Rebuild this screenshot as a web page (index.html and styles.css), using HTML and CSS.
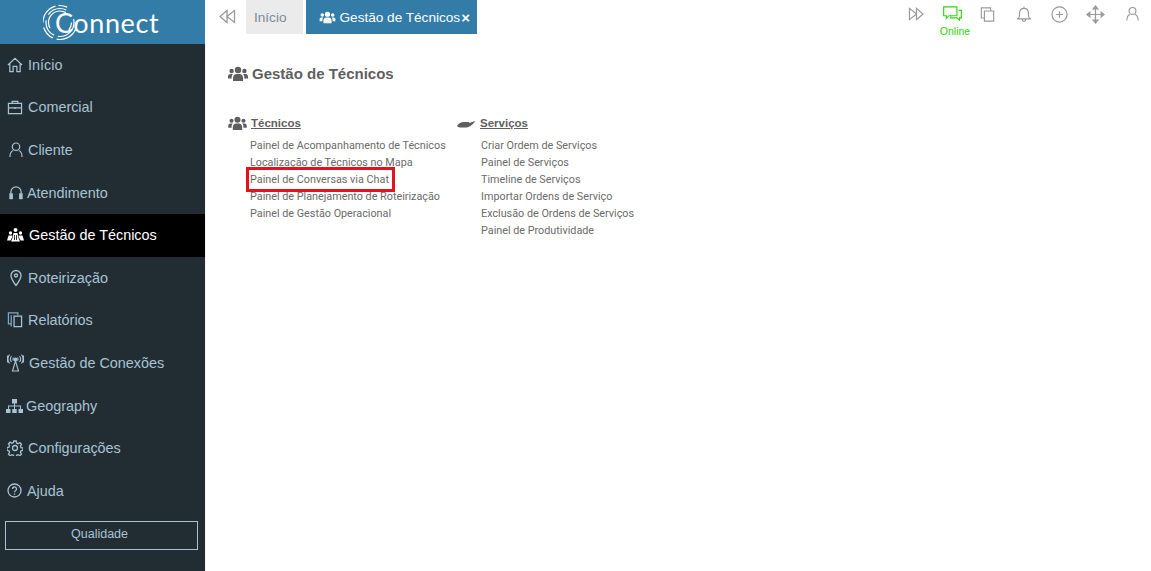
FILE: index.html
```html
<!DOCTYPE html>
<html>
<head>
<meta name="viewport" content="width=device-width, initial-scale=1">
<title>Connect</title>
<link rel="stylesheet" href="styles.css">
</head>
<body>

<svg class="defs" width="0" height="0">
	<symbol id="i-team" viewBox="0 0 20 16">
		<circle cx="10" cy="4" r="3.2"/>
		<circle cx="3.6" cy="5" r="2.2"/>
		<circle cx="16.4" cy="5" r="2.2"/>
		<path d="M5 15v-3.2C5 9.6 6.6 8 8.6 8h2.8C13.400 8 15 9.600 15 11.800V15z"/>
		<path d="M0 12.500V10.500C0 9 1 8 2.400 8H5C4 9 3.700 10 3.700 11.500V12.500z"/>
		<path d="M20 12.500V10.500C20 9 19 8 17.600 8H15C16 9 16.300 10 16.300 11.500V12.500z"/>
	</symbol>
</svg>

<div class="sidebar">
	<div class="logo">
		<svg class="logo-rings" width="35" height="37" viewBox="0 0 35 37">
			<circle cx="17" cy="18.500" r="17" stroke-dasharray="30 4 14 5 22 3 9 20"/>
			<circle cx="17" cy="18.500" r="14" stroke-dasharray="24 4 18 6 20 12"/>
			<circle cx="17" cy="18.500" r="11.500" stroke-dasharray="8 22 30 12"/>
		</svg>
		<span class="logo-text">Connect</span>
	</div>
	<ul class="menu">
		<li>
			<svg class="ico" width="16" height="16" viewBox="0 0 17 17"><path d="M1 8.500L8.500 1.500 16 8.500M3 7v8.500h3.500V10h4v5.500H14V7"/></svg>
			Início
		</li>
		<li>
			<svg class="ico" width="16" height="15" viewBox="0 0 17 16"><path d="M1.500 3.500h14v11h-14zM1.500 8.500h14M5.500 3.500V1.500h6v2M8.500 7.500v2"/></svg>
			Comercial
		</li>
		<li class="pad-1">
			<svg class="ico" width="14" height="16" viewBox="0 0 15 17"><circle cx="7.500" cy="5" r="4"/><path d="M1 16c0-4 2-6.500 3.500-7M14 16c0-4-2-6.500-3.500-7"/></svg>
			Cliente
		</li>
		<li class="pad-1 tight">
			<svg class="ico" width="14" height="16" viewBox="0 0 15 17"><path d="M2 13V7.500a5.500 5.500 0 0 1 11 0V13"/><rect x="1" y="9.500" width="2.500" height="5" fill="currentColor"/><rect x="11.500" y="9.500" width="2.500" height="5" fill="currentColor"/></svg>
			Atendimento
		</li>
		<li class="active">
			<svg class="ico ico-fill" width="17" height="14" viewBox="0 0 17 14"><circle cx="3.500" cy="5" r="1.700"/><circle cx="8.500" cy="2" r="2"/><circle cx="13.500" cy="5" r="1.700"/><path d="M0 12.500L1.500 7.500h4L5 9.500 3.500 12.500zM5.500 10L6.500 5h4l1 5 1.500 3.500H4zM17 12.500L15.500 7.500h-4L12 9.500l1.500 3z"/><path d="M7.500 7v5M9.500 7v5" stroke="#000" stroke-width="0.800"/></svg>
			Gestão de Técnicos
		</li>
		<li class="pad-1">
			<svg class="ico" width="14" height="18" viewBox="0 0 14 18"><path d="M7 16.500C4 12.500 2 9.500 2 6.500a5 5 0 0 1 10 0c0 3-2 6-5 10z"/><circle cx="7" cy="6.500" r="1.500"/></svg>
			Roteirização
		</li>
		<li>
			<svg class="ico" width="16" height="16" viewBox="0 0 17 17"><path d="M4.500 12.500H1.500V1h10v2.500" stroke="#7fa8c8"/><path d="M4.500 3.500v12" stroke="#7fa8c8"/><path d="M7.500 4.500h8v11h-8z"/></svg>
			Relatórios
		</li>
		<li>
			<svg class="ico ico-thick" width="17" height="18" viewBox="0 0 17 18"><circle cx="8.500" cy="5.500" r="1.500" fill="currentColor"/><path d="M8.500 7l-3 10h6zM6.500 6.500a2.500 2.500 0 0 1 0-3M10.500 6.500a2.500 2.500 0 0 0 0-3M4.500 8a5 5 0 0 1 0-6M12.500 8a5 5 0 0 0 0-6M2.500 9.500a8 8 0 0 1 0-9M14.500 9.500a8 8 0 0 0 0-9M1 8.500a7 7 0 0 1 0-7M16 8.500a7 7 0 0 0 0-7"/></svg>
			Gestão de Conexões
		</li>
		<li class="geo">
			<svg class="ico ico-fill" width="17" height="14" viewBox="0 0 17 14"><rect x="6" y="0" width="5" height="4.500"/><rect x="0" y="10" width="4.500" height="4"/><rect x="6.250" y="10" width="4.500" height="4"/><rect x="12.500" y="10" width="4.500" height="4"/><path d="M8 4h1v2.500h6v3.500h-1V7.500H9V10H8V7.500H3V10H2V6.500h6z"/></svg>
			Geography
		</li>
		<li>
			<svg class="ico" width="16" height="16" viewBox="0 0 16 16"><circle cx="8" cy="8" r="2.500"/><path d="M6.800 1h2.400l.4 2 1.500.7 1.800-1.100 1.600 1.700-1.100 1.700.6 1.600 2 .4v2.400l-2 .4-.6 1.500 1.100 1.800-1.600 1.600-1.800-1.100-1.500.6-.4 2H6.800l-.4-2-1.500-.6-1.800 1.100-1.600-1.600 1.100-1.800-.6-1.500-2-.4V7.600l2-.4.6-1.600-1.100-1.700 1.600-1.700 1.800 1.100 1.500-.7z"/></svg>
			Configurações
		</li>
		<li>
			<svg class="ico" width="15" height="15" viewBox="0 0 15 15"><circle cx="7.500" cy="7.500" r="6.500"/><path d="M5.500 6a2 2 0 1 1 3 1.700c-.7.400-1 .8-1 1.600M7.500 10.500v1.200"/></svg>
			Ajuda
		</li>
	</ul>
	<div class="quality">Qualidade</div>
</div>

<div class="main">
	<div class="topbar">
		<svg class="back" width="18" height="15" viewBox="0 0 18 15"><path d="M9 1.500L2 7.500l7 6zM16.500 1.500L9 7.500l7.500 6z"/></svg>
		<div class="tab">Início</div>
		<div class="tab tab-on">
			<svg class="tab-ico" width="17" height="13" viewBox="0 0 20 16"><use href="#i-team"/></svg>
			Gestão de Técnicos<span class="tab-x">×</span>
		</div>
		<div class="tools">
			<svg class="tool" width="17" height="14" viewBox="0 0 18 15"><path d="M9 1.500l7 6-7 6zM1.500 1.500L9 7.500l-7.500 6z"/></svg>
			<div class="status">
				<svg class="tool tool-on" width="21" height="15" viewBox="0 0 22 17"><path d="M1 1h15v10H7l-3 3v-3H1zM18 5h3v8.500h-2V16l-3-2.500H9V12"/></svg>
				<span>Online</span>
			</div>
			<svg class="tool" width="15" height="15" viewBox="0 0 16 17"><path d="M4.500 4.500h10.500v11.500H4.500zM4.500 12.500H1V1h10.500v3.500"/></svg>
			<svg class="tool tool-bell" width="14" height="18" viewBox="0 0 16 19"><path d="M1 15c2-1.500 2-3 2-6.500C3 5 5 3 8 3s5 2 5 5.500c0 3.500 0 5 2 6.500zM6 15.500a2 2.500 0 0 0 4 0M8 3V1"/></svg>
			<svg class="tool tool-plus" width="17" height="17" viewBox="0 0 18 18"><circle cx="9" cy="9" r="8"/><path d="M9 5.500v7M5.500 9h7"/></svg>
			<svg class="tool tool-move" width="19" height="19" viewBox="0 0 20 20"><path d="M10 1v18M1 10h18M7.500 4L10 1l2.500 3zM7.500 16l2.500 3 2.500-3zM4 7.500L1 10l3 2.500zM16 7.500l3 2.500-3 2.500z"/></svg>
			<svg class="tool tool-user" width="13" height="16" viewBox="0 0 15 17"><circle cx="7.500" cy="5" r="4"/><path d="M1 16c0-4 2-6.500 3.500-7M14 16c0-4-2-6.500-3.500-7"/></svg>
		</div>
	</div>

	<div class="content">
		<h2 class="page-title">
			<svg width="20" height="16" viewBox="0 0 20 16"><use href="#i-team"/></svg>
			Gestão de Técnicos
		</h2>
		<div class="groups">
			<div class="group group-1">
				<h3>
					<svg width="19" height="15" viewBox="0 0 20 16"><use href="#i-team"/></svg>
					<span>Técnicos</span>
				</h3>
				<ul>
					<li>Painel de Acompanhamento de Técnicos</li>
					<li>Localização de Técnicos no Mapa</li>
					<li class="mark">Painel de Conversas via Chat</li>
					<li>Painel de Planejamento de Roteirização</li>
					<li>Painel de Gestão Operacional</li>
				</ul>
			</div>
			<div class="group group-2">
				<h3>
					<svg width="18" height="9" viewBox="0 0 18 9"><path d="M0 7C1.500 4.500 4 3 7 3h4.500c.8 0 1 1 .2 1.200L9.500 5l5.500-2 2.500-.8c.5 0 .6.500.2.800C15 6 12.500 8.500 8.500 8.500H3.500C2.500 8.500 1 8 0 7z"/></svg>
					<span>Serviços</span>
				</h3>
				<ul>
					<li>Criar Ordem de Serviços</li>
					<li>Painel de Serviços</li>
					<li>Timeline de Serviços</li>
					<li>Importar Ordens de Serviço</li>
					<li>Exclusão de Ordens de Serviços</li>
					<li>Painel de Produtividade</li>
				</ul>
			</div>
		</div>
	</div>
</div>

</body>
</html>
```

FILE: styles.css
```css
* {
  box-sizing: border-box;
}

html, body {
  height: 100%;
}

body {
  margin: 0;
  display: flex;
  overflow: hidden;
  font-family: "Liberation Sans", Arial, sans-serif;
  background: #fff;
}

.defs {
  display: none;
}

/* Left menu */
.sidebar {
  width: 205px;
  flex: none;
  background: #222d33;
  color: #a9c3d3;
}

.logo {
  height: 44px;
  background: #337ca8;
  display: flex;
  align-items: center;
  padding-left: 43px;
}

.logo-rings {
  fill: none;
  stroke: #fff;
  stroke-width: 1.2;
  flex: none;
  margin-right: -23px;
}

.logo-text {
  color: #fff;
  font-family: Lato, sans-serif;
  font-size: 27px;
  letter-spacing: 0.6px;
}

.menu {
  list-style: none;
  margin: 0;
  padding: 0;
}

.menu li {
  height: 42.6px;
  display: flex;
  align-items: center;
  gap: 5px;
  padding: 0 0 1px 7px;
  font-size: 14.4px;
}

.menu li.pad-1 {
  padding-left: 9px;
}

.menu li.tight {
  gap: 4px;
}

.menu li.geo {
  padding-left: 6px;
  gap: 3px;
}

.menu li.active {
  background: #000;
  color: #fff;
}

.ico {
  flex: none;
  fill: none;
  stroke: currentColor;
  stroke-width: 1.300;
}

.ico-thick {
  stroke-width: 1.100;
}

.ico-fill {
  fill: currentColor;
  stroke: none;
}

.quality {
  margin: 8px 7px 0 5px;
  height: 29px;
  padding: 0 4px 2px 0;
  border: 1px solid #a9c3d3;
  display: flex;
  align-items: center;
  justify-content: center;
  font-size: 12.500px;
}

/* Tabs and tools */
.main {
  flex: 1;
  min-width: 0;
}

.topbar {
  height: 44px;
  display: flex;
  align-items: flex-start;
  padding-left: 13px;
}

.back {
  margin: 9px 10px 0 0;
  fill: none;
  stroke: #9a9a9a;
  stroke-width: 1.300;
}

.tab {
  height: 34px;
  padding: 0 16px 0 8px;
  margin-right: 3px;
  background: #ebebeb;
  color: #7d8a96;
  font-size: 13.600px;
  display: flex;
  align-items: center;
}

.tab-on {
  background: #337ca8;
  color: #fff;
  padding: 0 7px 0 13px;
}

.tab-ico {
  fill: #fff;
  margin-right: 4px;
}

.tab-x {
  font-weight: bold;
  font-size: 15px;
  margin-left: 1px;
}

.tools {
  margin-left: auto;
  height: 28px;
  display: flex;
  align-items: center;
  gap: 17px;
  padding-right: 12px;
}

.tool {
  fill: none;
  stroke: #9a9a9a;
  stroke-width: 1.300;
  flex: none;
}

.tool-on {
  stroke: #2fd30f;
}

.tool-bell {
  margin-left: 5px;
}

.tool-plus {
  margin-left: 3px;
}

.tool-move {
  margin-left: 1px;
}

.tool-user {
  margin-left: 4px;
}

.status {
  align-self: flex-start;
  width: 21px;
  margin-top: 6px;
  display: flex;
  flex-direction: column;
  align-items: center;
  gap: 4px;
  color: #2fd30f;
  font-size: 10.500px;
}

.status span {
  padding-left: 5px;
}

/* Page content */
.content {
  padding: 20px 0 0 22px;
  border-left: 1px solid #f3f3f3;
  height: 527px;
  color: #6b6b6b;
}

.page-title {
  margin: 0;
  font-size: 15px;
  font-weight: bold;
  color: #5f5f5f;
  display: flex;
  align-items: center;
  gap: 4px;
  line-height: 20px;
}

.page-title svg, .group h3 svg {
  fill: #5f5f5f;
}

.groups {
  display: flex;
  margin-top: 31px;
}

.group-1 {
  width: 229px;
}

.group h3 {
  margin: 0;
  display: flex;
  align-items: center;
  font-size: 11.500px;
  line-height: 16px;
  color: #5f5f5f;
  gap: 4px;
}

.group h3 span {
  text-decoration: underline;
}

.group ul {
  list-style: none;
  margin: 6px 0 0;
  padding: 0 0 0 22px;
  font-family: Roboto, sans-serif;
  font-size: 10.800px;
  line-height: 17px;
}

.group-2 h3 {
  gap: 5px;
}

.group-2 ul {
  padding-left: 24px;
}

/* Red box around the highlighted link */
.mark {
  width: fit-content;
  padding-right: 2px;
  outline: 3px solid #e5121d;
  outline-offset: 1px;
}
```
